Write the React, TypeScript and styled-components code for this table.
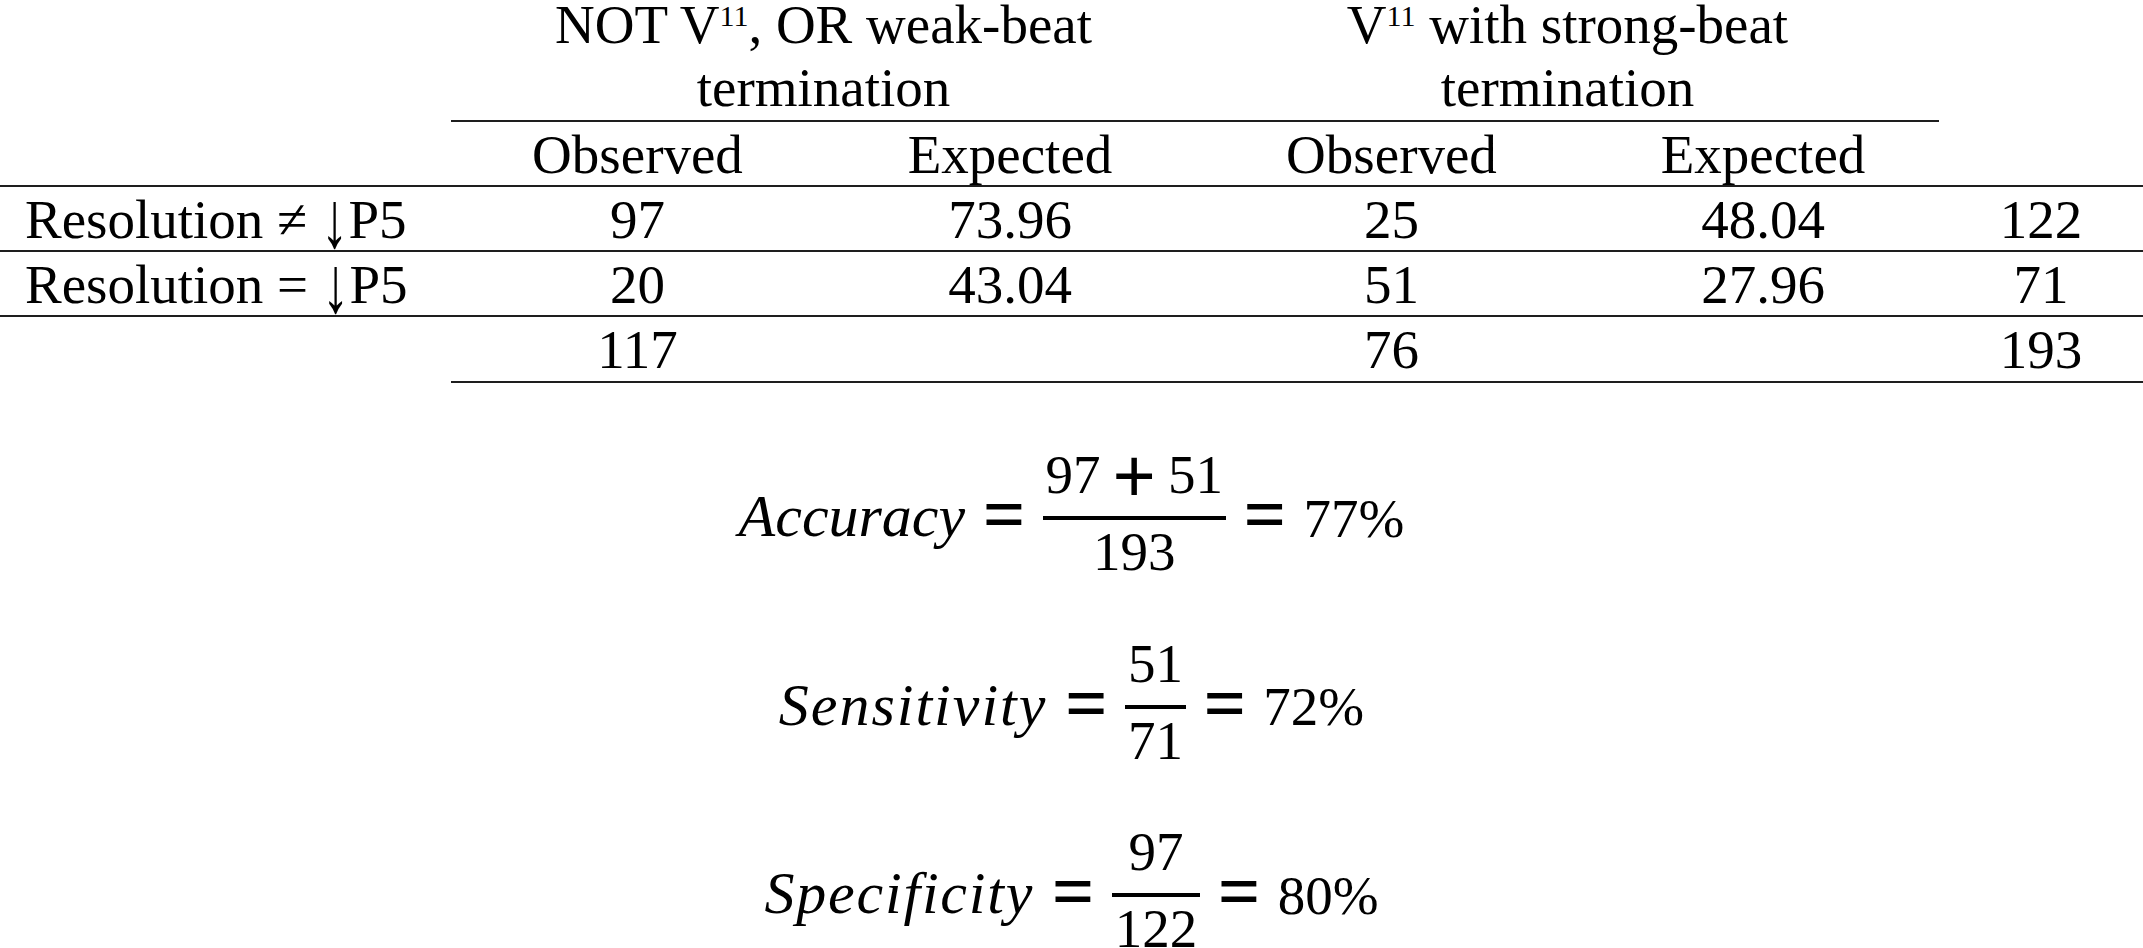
import React from "react";
import styled, { createGlobalStyle } from "styled-components";

const GlobalStyle = createGlobalStyle`
  html, body {
    margin: 0;
    padding: 0;
    background: #ffffff;
    overflow: hidden;
  }
  body {
    width: 2143px;
    height: 948px;
  }
`;

const Page = styled.div`
  width: 2143px;
  height: 948px;
  overflow: hidden;
  color: #000;
  font-family: "Liberation Serif", "Times New Roman", serif;
`;

const Table = styled.div`
  display: grid;
  grid-template-columns: 451px 373px 372px 391px 352px 204px;
  font-size: 55px;
`;

const RULE = "2px solid #1e1e1e";

const GroupHead = styled.div`
  grid-column: span 2;
  text-align: center;
  border-bottom: ${RULE};
  white-space: nowrap;
`;

const HeadLine = styled.div<{ $first?: boolean }>`
  line-height: ${(p) => (p.$first ? "50px" : "63.5px")};
  padding-top: ${(p) => (p.$first ? "0" : "6px")};
`;

const Sup = styled.span`
  font-size: 30px;
  line-height: 0;
  vertical-align: 17px;
`;

const Cell = styled.div<{ $ruled?: boolean; $label?: boolean }>`
  text-align: ${(p) => (p.$label ? "left" : "center")};
  padding: 3px 0 0 ${(p) => (p.$label ? "25px" : "0")};
  line-height: 60.3px;
  white-space: nowrap;
  border-bottom: ${(p) => (p.$ruled ? RULE : "2px solid transparent")};
`;

const Arrow = styled.span`
  display: inline-block;
  line-height: 60.3px;
  transform-origin: 50% 48.7px;
  transform: translateY(9px) scaleY(1.45);
`;

const Blank = styled.div``;

const Formulas = styled.div`
  display: flex;
  flex-direction: column;
  align-items: center;
  margin-top: 41.6px;
`;

const FormulaRow = styled.div`
  height: 188.3px;
  flex: none;
  display: flex;
  align-items: center;
  justify-content: center;
  white-space: nowrap;
`;

const Variable = styled.span<{ $spacing: number }>`
  font-style: italic;
  font-size: 60px;
  line-height: 60px;
  padding-bottom: 4px;
  letter-spacing: ${(p) => p.$spacing}px;
`;

const Equals = styled.span`
  font-family: "Noto Sans", "DejaVu Sans", sans-serif;
  font-size: 76px;
  line-height: 48px;
  padding-bottom: 10px;
  margin: 0 17px;
`;

const Fraction = styled.span`
  display: flex;
  flex-direction: column;
  align-items: center;
  padding-bottom: 10px;
`;

const Numerator = styled.span`
  font-size: 55px;
  line-height: 55px;
  padding: 0 3px;
  margin-bottom: 14px;
`;

const Operator = styled.span`
  font-family: "Noto Sans", "DejaVu Sans", sans-serif;
  font-size: 76px;
  line-height: 0;
  vertical-align: -11px;
  margin: 0 12px;
`;

const Bar = styled.span`
  align-self: stretch;
  height: 4px;
  background: #000;
`;

const Denominator = styled.span`
  font-size: 55px;
  line-height: 55px;
  padding: 0 3px;
  margin-top: 4px;
`;

const Result = styled.span`
  font-size: 55px;
  line-height: 55px;
`;

type Row = { relation?: string; values: string[]; labelRuled: boolean };

const rows: Row[] = [
  { relation: "\u2260", values: ["97", "73.96", "25", "48.04", "122"], labelRuled: true },
  { relation: "=", values: ["20", "43.04", "51", "27.96", "71"], labelRuled: true },
  { values: ["117", "", "76", "", "193"], labelRuled: false },
];

type Formula = {
  name: string;
  spacing: number;
  numerator: React.ReactNode;
  denominator: string;
  result: string;
};

const formulas: Formula[] = [
  {
    name: "Accuracy",
    spacing: 0,
    numerator: (
      <>
        97<Operator>+</Operator>51
      </>
    ),
    denominator: "193",
    result: "77%",
  },
  { name: "Sensitivity", spacing: 2, numerator: "51", denominator: "71", result: "72%" },
  { name: "Specificity", spacing: 1.8, numerator: "97", denominator: "122", result: "80%" },
];

export default function App() {
  return (
    <Page>
      <GlobalStyle />
      <Table>
        <Blank />
        <GroupHead>
          <HeadLine $first>
            NOT V<Sup>11</Sup>, OR weak-beat
          </HeadLine>
          <HeadLine>termination</HeadLine>
        </GroupHead>
        <GroupHead>
          <HeadLine $first>
            V<Sup>11</Sup> with strong-beat
          </HeadLine>
          <HeadLine>termination</HeadLine>
        </GroupHead>
        <Blank />

        <Cell $ruled $label />
        <Cell $ruled>Observed</Cell>
        <Cell $ruled>Expected</Cell>
        <Cell $ruled>Observed</Cell>
        <Cell $ruled>Expected</Cell>
        <Cell $ruled />

        {rows.map((r, i) => (
          <React.Fragment key={i}>
            <Cell $label $ruled={r.labelRuled}>
              {r.relation ? (
                <>
                  Resolution {r.relation} <Arrow>{"\u2193"}</Arrow>P5
                </>
              ) : null}
            </Cell>
            {r.values.map((v, j) => (
              <Cell key={j} $ruled>
                {v}
              </Cell>
            ))}
          </React.Fragment>
        ))}
      </Table>

      <Formulas>
        {formulas.map((f) => (
          <FormulaRow key={f.name}>
            <Variable $spacing={f.spacing}>{f.name}</Variable>
            <Equals>=</Equals>
            <Fraction>
              <Numerator>{f.numerator}</Numerator>
              <Bar />
              <Denominator>{f.denominator}</Denominator>
            </Fraction>
            <Equals>=</Equals>
            <Result>{f.result}</Result>
          </FormulaRow>
        ))}
      </Formulas>
    </Page>
  );
}
